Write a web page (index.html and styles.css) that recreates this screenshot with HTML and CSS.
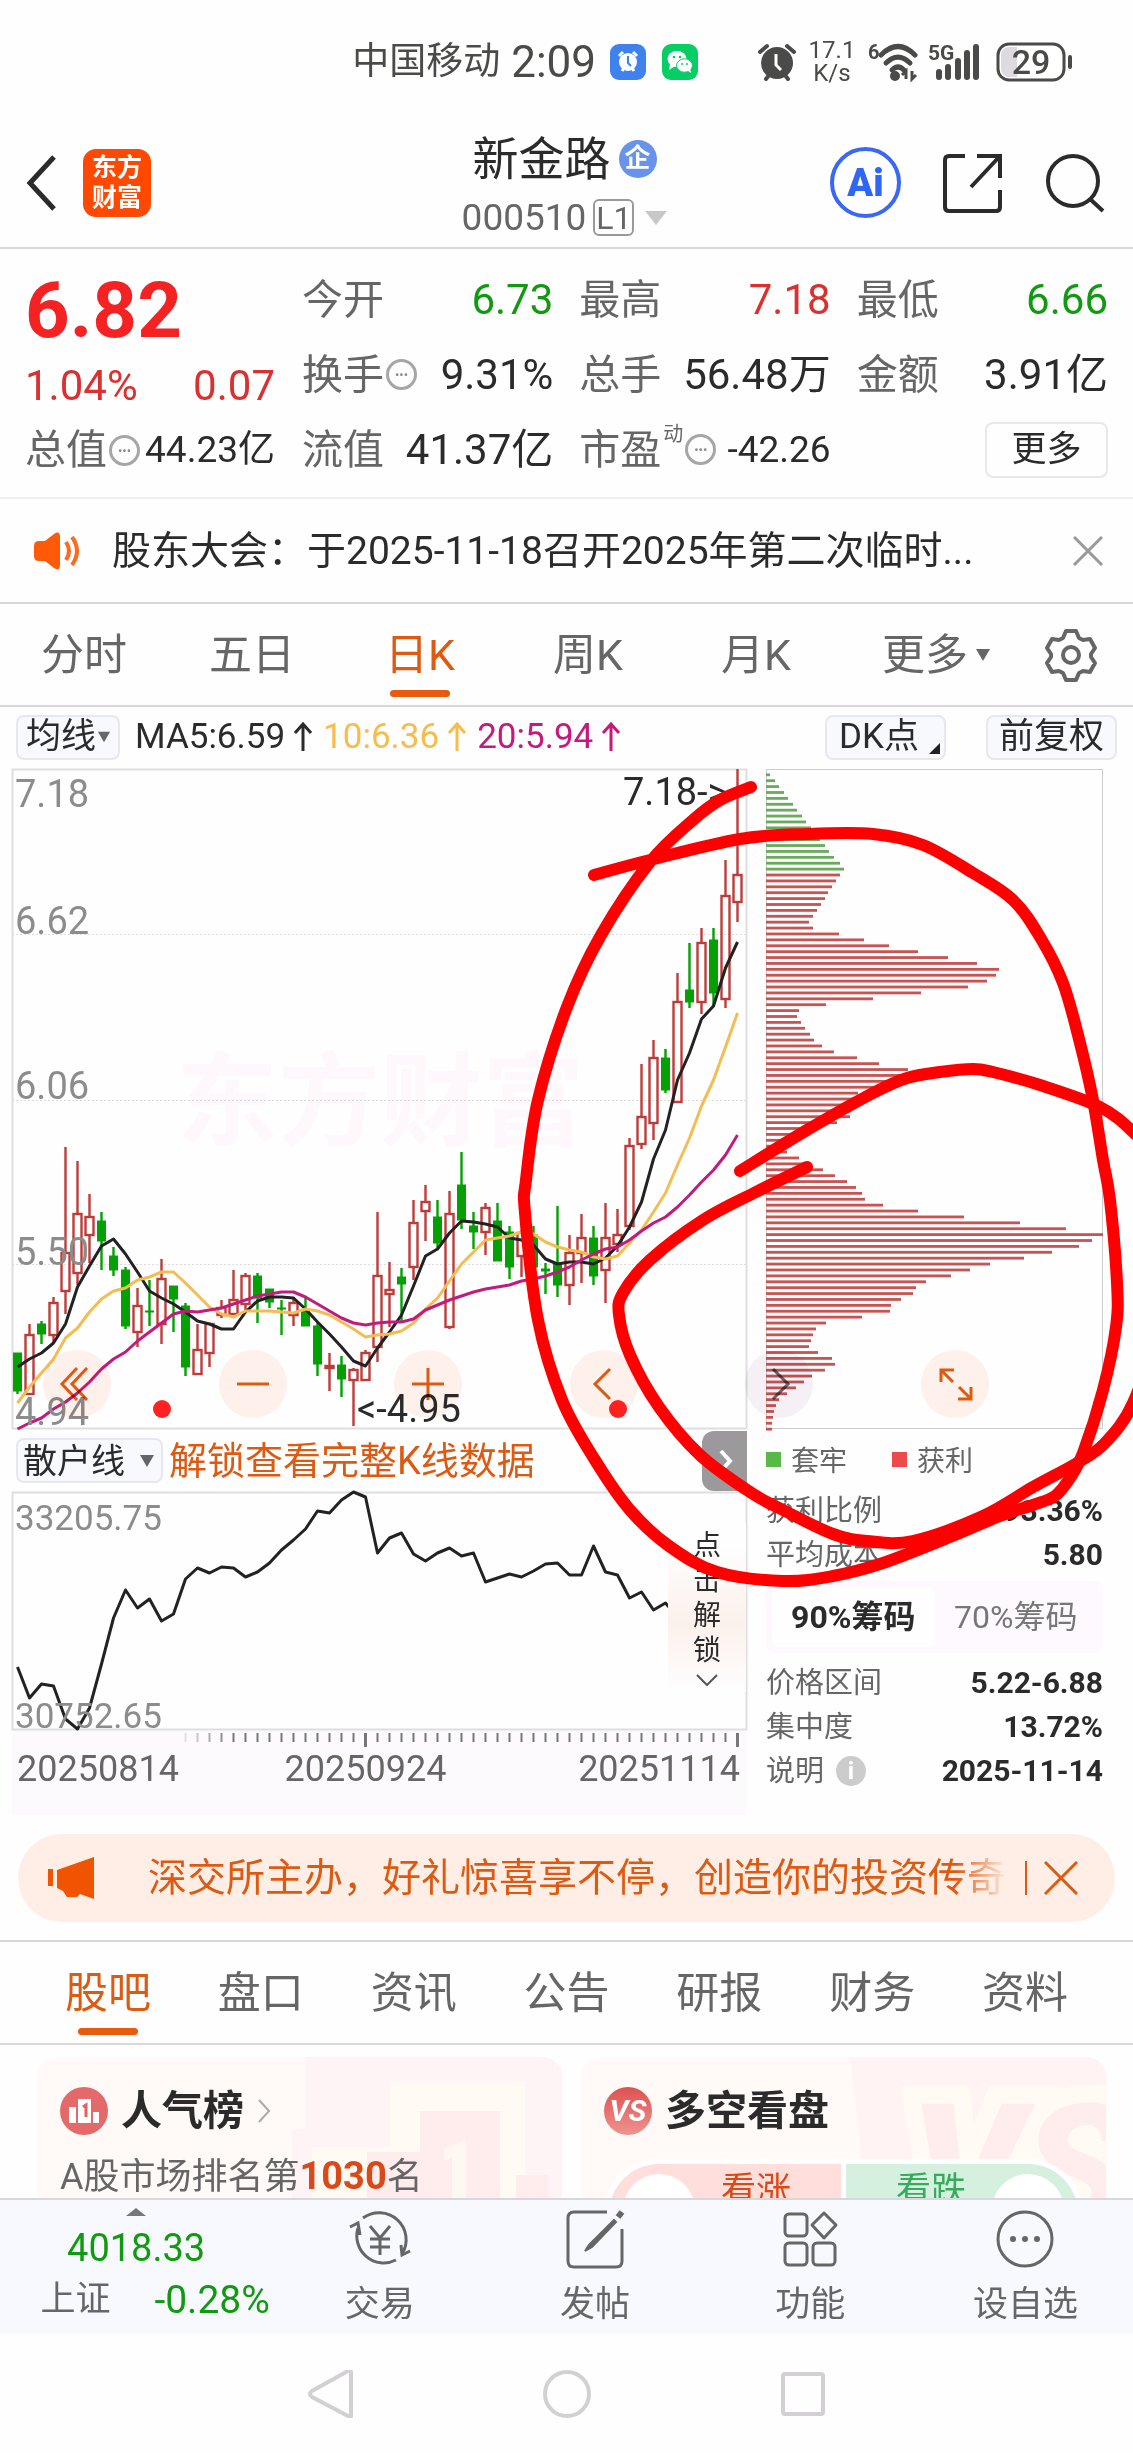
FILE: index.html
```html
<!DOCTYPE html>
<html lang="zh-CN">
<head>
<meta charset="utf-8">
<meta name="viewport" content="width=device-width, initial-scale=1">
<title>新金路 000510</title>
<link rel="stylesheet" href="styles.css">
</head>
<body>
<div class="app">
  <div class="status">
    <span class="carrier">中国移动</span>
    <span class="clock">2:09</span>
    <svg class="status-app" viewBox="0 0 36 36"><rect width="36" height="36" rx="9" fill="#3f82ee"/><circle cx="18" cy="18" r="9" fill="#fff"/><path d="M9 12l4-4M27 12l-4-4M12 27l2-3M24 27l-2-3" stroke="#fff" stroke-width="3"/><path d="M18 12v7l3 3" fill="none" stroke="#3f82ee" stroke-width="2"/></svg>
    <svg class="status-app second" viewBox="0 0 36 36"><rect width="36" height="36" rx="9" fill="#06ce64"/><ellipse cx="15" cy="15" rx="9.500" ry="8" fill="#fff"/><path d="M8 20l-1 6 6-4z" fill="#fff"/><ellipse cx="22.500" cy="21.500" rx="8" ry="6.700" fill="#fff" stroke="#06ce64"/><path d="M25 26l4 3-1-5z" fill="#fff"/><g fill="#06ce64"><circle cx="12" cy="13" r="1.300"/><circle cx="18" cy="13" r="1.300"/><circle cx="20" cy="20" r="1"/><circle cx="25" cy="20" r="1"/></g></svg>
    <svg class="alarm" viewBox="0 0 38 38"><circle cx="19" cy="20" r="16" fill="#4a4a48"/><path d="M2 9l7-6M36 9l-7-6M8 36l4-5M30 36l-4-5" stroke="#4a4a48" stroke-width="4" stroke-linecap="round"/><path d="M18 11v11l5 5" fill="none" stroke="#fff" stroke-width="3"/></svg>
    <span class="speed">17.1<br>K/s</span>
    <svg class="wifi" viewBox="0 0 52 42"><text x="0" y="18" font-size="20" font-weight="700">6</text><g fill="none" stroke="#4a4a48" stroke-width="5" stroke-linecap="round"><path d="M13 14q17-17 34 0"/><path d="M18 22q12-12 24 0"/><path d="M24 29q6-6 12 0"/></g><circle cx="27" cy="35" r="5" fill="#4a4a48"/><path d="M38 38v-8l-4 4M44 30v8l4-4" fill="none" stroke="#4a4a48" stroke-width="3"/></svg>
    <svg class="signal" viewBox="0 0 54 42"><text x="0" y="19" font-size="21" font-weight="700">5G</text><path d="M11 36v-5M20 36v-10M30 36v-16M39 36v-24M48 36V6" stroke="#4a4a48" stroke-width="6" stroke-linecap="round"/></svg>
    <svg class="battery" viewBox="0 0 78 40"><rect x="2" y="2" width="66" height="36" rx="11" fill="#fff" stroke="#4a4a48" stroke-width="3"/><path d="M13 5h8v30h-8a8 8 0 0 1-8-8V13a8 8 0 0 1 8-8z" fill="#dedadf"/><path d="M74 15v10" stroke="#4a4a48" stroke-width="4" stroke-linecap="round"/><text x="35" y="32" text-anchor="middle" font-size="34" font-weight="500">29</text></svg>
  </div>

  <header class="header">
    <div class="header-left">
      <button class="plain" aria-label="返回"><svg width="34" height="56" viewBox="0 0 34 56" fill="none" stroke="#2b2b2b" stroke-width="5"><path d="M30 2L6 28l24 26"/></svg></button>
      <span class="logo">东方<br>财富</span>
    </div>
    <div class="title-block">
      <h1>新金路<span class="corp">企</span></h1>
      <div class="code">000510<span class="level">L1</span><svg width="22" height="14" viewBox="0 0 22 14"><path d="M0 0h22L11 14z" fill="#c8c8c8"/></svg></div>
    </div>
    <div class="header-right">
      <button class="plain ai" aria-label="Ai">Ai</button>
      <button class="plain" aria-label="分享"><svg width="60" height="60" viewBox="0 0 60 60" fill="none" stroke="#2b2b2b" stroke-width="4"><path d="M22 3H6q-4 0-4 4v47q0 4 4 4h47q4 0 4-4V37M34 3h23v22M57 3L28 34"/></svg></button>
      <button class="plain" aria-label="搜索"><svg width="60" height="60" viewBox="0 0 60 60" fill="none" stroke="#2b2b2b" stroke-width="4"><circle cx="28" cy="28" r="25"/><path d="M45 46l13 12"/></svg></button>
    </div>
  </header>

  <section class="quote">
    <div class="last">
      <strong>6.82</strong>
      <div class="pair red"><span>1.04%</span><span>0.07</span></div>
      <div class="pair value"><span class="name">总值<i class="dots">•••</i></span><span class="small">44.23亿</span></div>
    </div>
    <dl class="stats">
      <div><dt>今开</dt><dd class="green">6.73</dd></div>
      <div><dt>最高</dt><dd class="red">7.18</dd></div>
      <div><dt>最低</dt><dd class="green">6.66</dd></div>
      <div><dt>换手<i class="dots">•••</i></dt><dd>9.31%</dd></div>
      <div><dt>总手</dt><dd>56.48万</dd></div>
      <div><dt>金额</dt><dd>3.91亿</dd></div>
      <div><dt>流值</dt><dd>41.37亿</dd></div>
      <div><dt>市盈<sup>动</sup><i class="dots">•••</i></dt><dd class="small">-42.26</dd></div>
      <div class="more-cell"><dt><button class="more">更多</button></dt></div>
    </dl>
  </section>

  <section class="notice">
    <svg width="46" height="38" viewBox="0 0 46 38"><path d="M0 14q0-5 5-5h6l9-7q6-4 6 3v28q0 7-6 3l-9-7H5q-5 0-5-5z" fill="#ff5a0a"/><path d="M32 10q6 9 0 18M38 5q10 14 0 28" fill="none" stroke="#ff6a20" stroke-width="4"/></svg>
    <p>股东大会：于2025-11-18召开2025年第二次临时...</p>
    <button class="plain" aria-label="关闭"><svg width="30" height="30" viewBox="0 0 30 30" stroke="#999" stroke-width="3"><path d="M1 1l28 28M29 1L1 29"/></svg></button>
  </section>

  <nav class="periods">
    <a href="#">分时</a><a href="#">五日</a><a href="#" class="active">日K</a><a href="#">周K</a><a href="#">月K</a><a href="#" class="more-tab">更多<svg width="14" height="12" viewBox="0 0 14 12"><path d="M0 0h14L7 12z" fill="#666"/></svg></a>
    <button class="plain" aria-label="设置"><svg width="54" height="54" viewBox="0 0 54 54" fill="none" stroke="#666" stroke-width="4" stroke-linejoin="round"><path d="M22 3h10l3 7 4 2 7-1 5 9-4 6v3l4 6-5 9-7-1-4 2-3 7H22l-3-7-4-2-7 1-5-9 4-6v-3l-4-6 5-9 7 1 4-2z"/><circle cx="27" cy="27" r="8"/></svg></button>
  </nav>

  <section class="analysis">
    <div class="toolbar">
      <button class="chip">均线<svg width="12" height="12" viewBox="0 0 14 12"><path d="M0 0h14L7 12z" fill="#666"/></svg></button>
      <span class="ma">MA5:6.59<svg width="20" height="30" viewBox="0 0 20 30"><path d="M10 29V2M2 11l8-9 8 9"/></svg></span>
      <span class="ma ten">10:6.36<svg width="20" height="30" viewBox="0 0 20 30"><path d="M10 29V2M2 11l8-9 8 9"/></svg></span>
      <span class="ma twenty">20:5.94<svg width="20" height="30" viewBox="0 0 20 30"><path d="M10 29V2M2 11l8-9 8 9"/></svg></span>
      <button class="chip dk">DK点<svg width="11" height="11" viewBox="0 0 11 11"><path d="M11 0v11H0z" fill="#222"/></svg></button>
      <button class="chip right">前复权</button>
    </div>
    <div class="charts">
      <div class="left-col">
        <svg class="chart" id="price" viewBox="12 769 735 660"></svg>
        <div class="indicator">
          <button class="chip">散户线<svg width="14" height="12" viewBox="0 0 14 12"><path d="M0 0h14L7 12z" fill="#666"/></svg></button>
          <a href="#">解锁查看完整K线数据</a>
          <button class="fold" aria-label="收起"><svg width="14" height="24" viewBox="0 0 14 24" fill="none" stroke="#fff" stroke-width="4"><path d="M2 2l9 10-9 10"/></svg></button>
        </div>
        <div class="sub">
          <svg class="chart" id="retail" viewBox="12 1492 735 238"></svg>
          <button class="unlock">点击解锁<svg width="22" height="12" viewBox="0 0 22 12" fill="none" stroke="#555" stroke-width="2"><path d="M1 1l10 10L21 1"/></svg></button>
        </div>
        <svg class="chart axis" id="ticks" viewBox="12 1730 735 85"></svg>
      </div>
      <div class="right-col">
        <svg class="chart" id="chips" viewBox="766 769 337 660"></svg>
        <div class="legend"><span><i class="trapped"></i>套牢</span><span><i class="profit"></i>获利</span></div>
        <dl class="facts">
          <div><dt>获利比例</dt><dd>93.36%</dd></div>
          <div><dt>平均成本</dt><dd>5.80</dd></div>
        </dl>
        <div class="switch"><button class="on">90%筹码</button><button>70%筹码</button></div>
        <dl class="facts">
          <div><dt>价格区间</dt><dd>5.22-6.88</dd></div>
          <div><dt>集中度</dt><dd>13.72%</dd></div>
          <div><dt>说明<i class="info">i</i></dt><dd>2025-11-14</dd></div>
        </dl>
      </div>
      <div class="controls">
        <button aria-label="最左"><svg viewBox="0 0 68 68"><path d="M34 18L19 34l15 16M44 18L29 34l15 16"/></svg></button>
        <button aria-label="缩小"><svg viewBox="0 0 68 68"><path d="M18 34h32"/></svg></button>
        <button aria-label="放大"><svg viewBox="0 0 68 68"><path d="M18 34h32M34 18v32"/></svg></button>
        <button aria-label="左移"><svg viewBox="0 0 68 68"><path d="M40 19L25 34l15 15"/></svg></button>
        <button aria-label="右移" class="off"><svg viewBox="0 0 68 68"><path d="M28 19l15 15-15 15"/></svg></button>
        <button aria-label="全屏"><svg viewBox="0 0 68 68"><path d="M20 32V20h13M20 20l12 12M50 37v12H37M50 49L38 37"/></svg></button>
      </div>
    </div>
    <svg class="marks" id="marks" viewBox="0 707 1133 1108"></svg>
  </section>

  <section class="promo">
    <svg width="48" height="42" viewBox="0 0 48 42"><path d="M0 12h5v17H0zM9 13L46 0v42l-14-5-3 3H19l-4-6-6-3z" fill="#f05400"/></svg>
    <p>深交所主办，好礼惊喜享不停，创造你的投资传奇！</p>
    <button class="plain" aria-label="关闭"><svg width="34" height="34" viewBox="0 0 34 34" stroke="#dd5a12" stroke-width="3"><path d="M1 1l32 32M33 1L1 33"/></svg></button>
  </section>

  <nav class="sections">
    <a href="#" class="active">股吧</a><a href="#">盘口</a><a href="#">资讯</a><a href="#">公告</a><a href="#">研报</a><a href="#">财务</a><a href="#">资料</a>
  </nav>

  <main class="feed">
    <article class="card rank">
      <svg class="art" width="270" height="143" viewBox="0 0 270 143" aria-hidden="true"><path d="M14 0h256v143H0V72h14z" fill="#fff4f5"/><path d="M98 24h135v119H20V90h78z" fill="#fffaf4"/><path d="M128 54h80v89H75V95h53zM224 118h32v25h-32z" fill="#ffeded"/><path d="M152 92l22-10v61h-14V100l-8 4z" fill="#fff7f2"/></svg>
      <h2><svg class="badge" viewBox="0 0 48 48"><circle cx="24" cy="24" r="24" fill="#e4696a"/><path d="M9 20h7v16H9zM18 12h13v24H18zM33 25h6v11h-6z" fill="#fff"/><path d="M23 20l3-2v12" fill="none" stroke="#e2605e" stroke-width="3"/></svg>人气榜<svg width="14" height="24" viewBox="0 0 14 24" fill="none" stroke="#aaa" stroke-width="2"><path d="M2 1l10 11L2 23"/></svg></h2>
      <p>A股市场排名第<b>1030</b>名</p>
    </article>
    <article class="card">
      <svg class="art" width="256" height="143" viewBox="0 0 256 143" aria-hidden="true"><path d="M0 0h256v143H16z" fill="#fff3f4"/><text x="60" y="172">VS</text></svg>
      <h2><span class="badge vs">VS</span>多空看盘</h2>
      <div class="vote"><button class="up"><i></i>看涨</button><button class="down">看跌<i></i></button></div>
    </article>
  </main>

  <footer class="tabbar">
    <a href="#" class="index">
      <svg width="20" height="8" viewBox="0 0 20 8"><path d="M0 8L10 0l10 8z" fill="#777"/></svg>
      <span class="green point">4018.33</span>
      <span class="index-row"><span>上证</span><span class="green change">-0.28%</span></span>
    </a>
    <a href="#"><svg viewBox="0 0 64 60"><path d="M15 9a27 27 0 0 1 39 36M48 51A27 27 0 0 1 10 19M2 18l8-4 2 12M62 42l-8 4-1-10"/><path d="M22 17l10 12 10-12M22 30h20M22 38h20M32 29v17"/></svg>交易</a>
    <a href="#"><svg viewBox="0 0 64 60"><path d="M44 3H11q-6 0-6 6v43q0 6 6 6h42q6 0 6-6V20"/><path d="M51 11L26 36l-4 6 7-4 24-25z" fill="#666" stroke-width="2"/><path d="M59 3l-4 5" stroke-width="6"/></svg>发帖</a>
    <a href="#"><svg viewBox="0 0 64 60"><rect x="7" y="5" width="22" height="22" rx="4"/><rect x="7" y="34" width="22" height="22" rx="4"/><rect x="35" y="34" width="22" height="22" rx="4"/><path d="M46 4l12 12-12 13-12-13z" stroke-linejoin="round"/></svg>功能</a>
    <a href="#"><svg viewBox="0 0 64 60"><circle cx="32" cy="30" r="27"/><g fill="#666" stroke="none"><circle cx="20" cy="30" r="3"/><circle cx="32" cy="30" r="3"/><circle cx="44" cy="30" r="3"/></g></svg>设自选</a>
  </footer>

  <div class="system">
    <svg viewBox="0 0 48 48"><path d="M44 2v44q0 2-3 0L5 27q-4-3 0-6L41 1q3-1 3 1z"/></svg>
    <svg viewBox="0 0 48 48"><circle cx="24" cy="24" r="22"/></svg>
    <svg viewBox="0 0 48 48"><rect x="4" y="4" width="40" height="40" rx="2"/></svg>
  </div>
</div>
<script src="script.js"></script>
</body>
</html>
```
FILE: styles.css
```css
* { box-sizing: border-box; }
body, h1, h2, p, dl, dd { margin: 0; }
body { background: #fefefe; color: #2b2b2b; font-family: Roboto, "Noto Sans CJK SC", sans-serif; overflow-x: hidden; }
button { font: inherit; color: inherit; margin: 0; }
a { color: inherit; text-decoration: none; }
i { font-style: normal; }
svg { display: block; flex: none; }
.plain { border: 0; padding: 0; background: none; }
.red { color: #d93030; }
.green { color: #119a11; }

.app { display: flex; flex-direction: column; height: 100vh; }
.app > * { flex: none; }

.status { height: 124px; padding-right: 59px; display: flex; align-items: center; justify-content: flex-end; color: #4a4a48; font-size: 37px; line-height: 44px; }
.status text { fill: #4a4a48; }
.clock { font-size: 44px; margin: 0 14px 0 11px; }
.status-app { width: 36px; height: 36px; }
.second { margin: 0 60px 0 16px; }
.alarm { width: 38px; height: 38px; }
.speed { width: 48px; margin: 0 12px; font-size: 24px; line-height: 23px; text-align: center; }
.wifi { width: 52px; height: 42px; margin-right: 8px; }
.signal { width: 54px; height: 42px; margin-right: 14px; }
.battery { width: 78px; height: 40px; }

.header { height: 125px; padding: 0 28px 0 24px; display: grid; grid-template-columns: 1fr auto 1fr; align-items: center; border-bottom: 2px solid #d8d8d8; }
.header-left, .header-right { display: flex; align-items: center; padding-bottom: 6px; }
.header-left { gap: 25px; }
.header-right { justify-content: flex-end; gap: 42px; }
.logo { width: 68px; height: 68px; padding-top: 4px; border-radius: 13px; background: #ff4800; color: #fff; font-size: 25px; font-weight: 700; line-height: 30px; text-align: center; }
.title-block { display: flex; flex-direction: column; align-items: center; gap: 4px; }
h1 { display: flex; align-items: center; gap: 8px; font-size: 46px; font-weight: 400; line-height: 60px; }
.corp { width: 38px; height: 38px; border-radius: 50%; background: #6893ea; color: #fff; font-size: 26px; line-height: 36px; text-align: center; font-weight: 700; }
.code { display: flex; align-items: center; font-size: 37px; line-height: 50px; color: #666; }
.level { margin: 0 11px 0 7px; width: 41px; height: 37px; border: 2px solid #999; border-radius: 6px; font-size: 32px; line-height: 34px; text-align: center; }
.ai { width: 71px; height: 71px; border: 4px solid #3a68f0; border-radius: 50%; color: #2f66f6; font-size: 38px; font-weight: 900; line-height: 60px; }

.quote { display: grid; grid-template-columns: 250px 1fr; gap: 27px; height: 250px; padding: 13px 25px 0; border-bottom: 2px solid #eee; }
.last strong { display: block; font-size: 78px; line-height: 98px; color: #f42222; }
.pair { display: flex; justify-content: space-between; align-items: center; font-size: 42px; line-height: 52px; }
.value { margin-top: 12px; font-size: 41px; }
.name { color: #666; display: flex; align-items: center; gap: 2px; }
.small { font-size: 37px; }
.stats { display: grid; grid-template-columns: repeat(3, 1fr); column-gap: 26px; grid-auto-rows: 75px; }
.stats > div { display: flex; justify-content: space-between; align-items: center; font-size: 41px; line-height: 52px; }
.stats dt { color: #666; display: flex; align-items: center; gap: 2px; }
.stats dd { font-size: 42px; }
.stats sup { align-self: flex-start; font-size: 20px; line-height: 20px; }
.stats .small { font-size: 37px; }
.dots { width: 31px; height: 31px; border: 3px solid #a6a6a6; border-radius: 50%; color: #8c8c8c; font-size: 13px; line-height: 25px; text-align: center; }
.stats .more-cell { justify-content: flex-end; }
.more { width: 123px; height: 56px; border: 2px solid #e8e8e8; border-radius: 8px; background: #fefefe; color: #2b2b2b; font-size: 35px; line-height: 48px; padding: 0; }

.notice { height: 105px; padding: 0 30px 0 34px; display: flex; align-items: center; border-bottom: 2px solid #d8d8d8; }
.notice p { flex: 1; margin-left: 32px; font-size: 39px; line-height: 52px; white-space: nowrap; }

.periods { height: 103px; display: grid; grid-template-columns: repeat(6, 168fr) 125fr; align-items: center; justify-items: center; border-bottom: 2px solid #d8d8d8; color: #666; font-size: 43px; }
.periods a { position: relative; line-height: 60px; display: flex; align-items: center; gap: 8px; }
.periods .more-tab { padding-left: 24px; }
.active { color: #dd5a12; }
.active::after { content: ""; position: absolute; left: 50%; bottom: -12px; width: 60px; height: 7px; margin-left: -30px; border-radius: 4px; background: #e85a0c; }

.analysis { position: relative; }
.toolbar { height: 62px; padding: 0 16px 2px; display: flex; align-items: center; }
.chip { height: 45px; padding: 0 8px; display: flex; align-items: center; gap: 2px; border: 2px solid #e6e8ee; border-radius: 8px; background: #f7f9fe; font-size: 35px; line-height: 40px; white-space: nowrap; }
.ma { display: flex; align-items: center; gap: 8px; margin-left: 15px; font-size: 35px; line-height: 44px; }
.ma path { fill: none; stroke: currentColor; stroke-width: 3; }
.ma + .ma { margin-left: 10px; }
.ten { color: #f6bd4c; }
.twenty { color: #c5197d; }
.dk { margin-left: auto; gap: 10px; padding: 0 4px 0 12px; }
.dk svg { align-self: flex-end; margin-bottom: 4px; }
.right { margin-left: 40px; padding: 0 11px; }
.charts { position: relative; display: grid; grid-template-columns: 735fr 337fr; gap: 19px; padding: 0 30px 0 12px; }
.chart { width: 100%; overflow: visible; }
.chart text { font-size: 38px; fill: #8c8c8c; }
.chart .mark-text { fill: #2b2b2b; }
.chart .watermark { font-size: 102px; font-weight: 700; fill: #fef8fc; }
#retail text { font-size: 35px; }
#ticks text { font-size: 36px; fill: #666; }
.indicator { height: 63px; display: flex; align-items: center; padding-left: 4px; }
.indicator .chip { gap: 15px; padding: 0 7px 0 5px; font-size: 34px; }
.indicator a { margin-left: 6px; color: #dd5a12; font-size: 38px; line-height: 52px; white-space: nowrap; }
.fold { margin-left: auto; width: 45px; height: 60px; border: 0; border-radius: 12px 0 0 12px; background: #9c999c; padding: 0 0 0 17px; }
.sub { position: relative; }
.unlock { position: absolute; right: 1px; top: 30px; width: 78px; height: 170px; border: 0; padding: 0 24px; background: linear-gradient(#fefefe 15%, #fbf1ec 60%, #fefefe); font-size: 28px; line-height: 35px; word-break: break-all; display: flex; flex-direction: column; align-items: center; justify-content: center; gap: 6px; }
.axis { background: #fdfafe; }
.right-col { display: flex; flex-direction: column; }
.legend { display: flex; gap: 45px; height: 60px; align-items: center; font-size: 28px; color: #666; }
.legend span { display: flex; align-items: center; gap: 10px; }
.legend i { width: 15px; height: 15px; }
.trapped { background: #59b947; }
.profit { background: #ec4a4c; }
.facts > div { display: flex; justify-content: space-between; align-items: center; height: 44px; font-size: 29px; line-height: 40px; }
.facts dt { color: #666; display: flex; align-items: center; gap: 12px; }
.facts dd { font-weight: 700; font-size: 30px; }
.info { width: 30px; height: 30px; border-radius: 50%; background: #ccc; color: #fff; font-size: 24px; line-height: 30px; font-weight: 700; text-align: center; }
.switch { display: grid; grid-template-columns: 1fr 1fr; margin: 4px 0 8px; padding: 6px; background: #fdf9fe; border-radius: 8px; }
.switch button { border: 0; padding: 0; height: 60px; background: none; border-radius: 6px; font-size: 32px; line-height: 44px; color: #777; }
.switch .on { background: #fefefe; font-weight: 700; color: #2b2b2b; }
.controls { position: absolute; left: 43px; right: 144px; top: 581px; display: flex; justify-content: space-between; mix-blend-mode: multiply; }
.controls button { width: 68px; height: 68px; border: 0; border-radius: 50%; padding: 0; background: #fff1ec; }
.controls path { fill: none; stroke: #dd5a12; stroke-width: 3; }
.controls .off { background: #f6f1f7; }
.controls .off path { stroke: #666; }
.marks { position: absolute; inset: 0; width: 100%; pointer-events: none; }
.marks path { fill: none; stroke: #fe0000; stroke-width: 12; stroke-linecap: round; stroke-linejoin: round; }

.promo { margin: 19px 18px 18px; height: 88px; border-radius: 44px; background: #feeee6; display: flex; align-items: center; padding: 0 37px 0 30px; color: #dd5a12; }
.promo p { flex: 1; min-width: 0; margin: 0 18px 0 52px; overflow: hidden; white-space: nowrap; font-size: 39px; line-height: 60px; -webkit-mask-image: linear-gradient(90deg, #000 94%, transparent); mask-image: linear-gradient(90deg, #000 94%, transparent); }
.promo .plain { border-left: 2px solid #dd5a12; padding-left: 17px; }

.sections { height: 105px; padding: 0 65px; border-top: 2px solid #d8d8d8; border-bottom: 2px solid #d8d8d8; display: flex; align-items: center; justify-content: space-between; color: #666; font-size: 43px; line-height: 60px; }
.sections a { position: relative; }

.app > .feed { flex: 1; min-height: 0; overflow: hidden; display: grid; grid-template-columns: 1fr 1fr; grid-auto-rows: 240px; gap: 19px; padding: 12px 27px 0 37px; }
.card { position: relative; overflow: hidden; border-radius: 20px; padding: 26px 23px; background: #fffaf7; }
.card > * { position: relative; }
.card .art { position: absolute; right: 0; top: 0; }
.art text { font-size: 176px; font-weight: 900; font-style: italic; fill: #ffecec; stroke: #fffaf4; stroke-width: 36px; paint-order: stroke; }
h2 { display: flex; align-items: center; gap: 13px; font-size: 41px; line-height: 56px; }
.badge { width: 48px; height: 48px; }
.vs { border-radius: 50%; background: linear-gradient(#dd5150, #ee9490); color: #fff; font-size: 30px; line-height: 48px; text-align: center; font-style: italic; }
.card p { margin-top: 12px; font-size: 36px; line-height: 52px; color: #666; }
.card b { font-size: 38px; line-height: 48px; color: #d84a18; }
.vote { display: grid; grid-template-columns: 1fr 1fr; gap: 5px; margin-top: 20px; padding: 5px; border-radius: 60px; background: #fff; }
.vote button { height: 100px; border: 0; padding: 0 14px; display: flex; align-items: flex-start; gap: 26px; font-size: 35px; line-height: 54px; }
.vote i { width: 72px; height: 72px; margin-top: 10px; border-radius: 50%; background: #fff; }
.up { border-radius: 50px 0 0 50px; background: #ffdedc; color: #d84a18; }
.down { border-radius: 0 50px 50px 0; background: #d5f0de; color: #36ab5c; justify-content: flex-end; }

.tabbar { height: 136px; border-top: 2px solid #d8d8d8; background: #f7f9fe; display: grid; grid-template-columns: 272fr 215fr 215fr 215fr 215fr; color: #666; font-size: 35px; line-height: 50px; }
.tabbar a { display: flex; flex-direction: column; align-items: center; gap: 11px; padding-top: 9px; }
.tabbar a > svg { width: 64px; height: 60px; fill: none; stroke: #666; stroke-width: 3; }
.tabbar a.index { gap: 8px; padding-top: 8px; }
.tabbar .index > svg { width: 20px; height: 8px; stroke: none; }
.point { font-size: 38px; line-height: 48px; }
.index-row { display: flex; gap: 44px; padding-left: 38px; line-height: 40px; }
.change { font-size: 39px; }

.system { height: 119px; display: flex; align-items: center; justify-content: center; gap: 188px; }
.system svg { width: 48px; height: 48px; fill: none; stroke: #d2d0d2; stroke-width: 4; }
```
FILE: script.js
```js
const NS = 'http://www.w3.org/2000/svg';
const add = (parent, tag, attrs, text) => {
  const el = document.createElementNS(NS, tag);
  for (const k in attrs) el.setAttribute(k, attrs[k]);
  if (text) el.textContent = text;
  parent.appendChild(el);
};
const xAt = i => 17.5 + 12 * i;
const RED = '#bd3c3a', GREEN = '#04a004';

// Candles: kind, body top, body bottom, high, low
const candles = [
  ['g',1353,1391,1353,1394],['r',1335,1394,1324,1394],['g',1324,1334,1321,1344],['r',1303,1335,1297,1343],['r',1253,1291,1147,1314],
  ['r',1214,1273,1161,1285],['r',1217,1235,1194,1263],['g',1221,1241,1212,1270],['g',1256,1270,1247,1276],['g',1270,1326,1267,1329],
  ['r',1306,1332,1288,1347],['g',1311,1312,1280,1326],['r',1279,1324,1259,1344],['g',1286,1299,1286,1332],['g',1306,1367,1303,1376],
  ['r',1350,1374,1324,1374],['r',1324,1353,1324,1367],['r',1308,1315,1300,1318],['r',1300,1314,1270,1314],['r',1276,1304,1273,1313],
  ['g',1276,1298,1273,1323],['g',1289,1302,1289,1308],['g',1308,1309,1300,1335],['r',1303,1315,1297,1326],['g',1310,1326,1297,1326],
  ['g',1326,1364,1323,1376],['r',1366,1368,1353,1391],['g',1365,1379,1356,1397],['r',1370,1380,1368,1426],['r',1353,1380,1350,1380],
  ['r',1276,1347,1212,1362],['r',1290,1294,1262,1327],['g',1277,1284,1268,1321],['r',1223,1267,1200,1280],['r',1202,1211,1185,1241],
  ['g',1217,1243,1200,1249],['r',1214,1327,1191,1329],['g',1185,1220,1152,1229],['g',1226,1232,1212,1249],['r',1208,1232,1203,1255],
  ['g',1221,1261,1203,1261],['g',1232,1267,1226,1279],['r',1233,1256,1230,1277],['g',1235,1267,1226,1272],['g',1269,1271,1263,1294],
  ['g',1264,1285,1206,1297],['r',1253,1285,1235,1305],['r',1238,1253,1214,1283],['g',1238,1276,1226,1285],['r',1238,1270,1203,1303],
  ['r',1235,1244,1209,1252],['r',1146,1226,1138,1230],['r',1117,1144,1064,1149],['r',1058,1123,1040,1140],['g',1058,1090,1049,1093],
  ['r',1002,1102,973,1102],['g',990,1002,943,1008],['r',943,1002,928,1014],['g',940,993,928,1007],['r',896,999,860,1008],['r',875,902,769,922]
];
const ma5 = [1367,1359,1353,1343,1324,1287,1266,1246,1239,1254,1272,1291,1298,1304,1312,1321,1324,1329,1329,1312,1301,1297,1297,1298,1309,1322,1334,1347,1361,1366,1348,1332,1315,1286,1256,1249,1233,1221,1222,1224,1227,1238,1240,1245,1259,1264,1262,1262,1264,1258,1246,1227,1202,1159,1130,1080,1053,1019,1006,968,942];
const ma10 = [1403,1387,1373,1359,1338,1328,1312,1299,1291,1288,1280,1277,1272,1272,1283,1295,1307,1314,1317,1311,1311,1311,1312,1313,1309,1311,1315,1322,1329,1337,1335,1334,1331,1323,1309,1298,1281,1264,1252,1240,1238,1236,1232,1234,1242,1247,1250,1252,1257,1259,1256,1243,1230,1212,1193,1165,1138,1106,1080,1047,1013];
const ma20 = [1429,1423,1418,1409,1402,1393,1382,1369,1359,1352,1341,1332,1323,1314,1311,1312,1310,1308,1304,1300,1296,1294,1292,1292,1297,1304,1311,1318,1323,1325,1323,1322,1322,1319,1310,1305,1300,1296,1292,1289,1287,1285,1281,1279,1276,1272,1267,1260,1254,1249,1247,1240,1231,1223,1217,1207,1195,1182,1170,1155,1135];
const retail = [1667,1698,1684,1686,1719,1729,1708,1664,1618,1590,1608,1599,1621,1614,1579,1568,1573,1567,1568,1577,1572,1563,1550,1540,1529,1511,1513,1500,1492,1497,1553,1538,1533,1554,1561,1553,1548,1556,1553,1582,1578,1574,1577,1571,1564,1563,1575,1575,1546,1572,1575,1598,1592,1610,1603,1617];
const chips = [4,9,13,18,22,27,31,36,40,45,49,54,59,63,68,74,78,74,70,66,62,59,55,51,47,43,47,73,98,123,152,182,211,233,230,221,202,155,107,60,33,31,35,39,44,48,56,68,91,113,142,134,122,108,92,88,87,85,84,71,53,38,28,18,21,33,45,57,69,81,90,96,99,117,152,198,254,300,337,326,313,286,258,224,204,185,160,150,147,135,125,124,96,60,50,47,45,43,52,66,69,59,46,38,30,21,13,10,8,7,6,6];

const line = (svg, ys, color) => add(svg, 'polyline', {
  points: ys.map((y, i) => xAt(i) + ',' + y).join(' '), fill: 'none', stroke: color, 'stroke-width': 3, 'stroke-linejoin': 'round'
});

const price = document.getElementById('price');
add(price, 'text', { x: 176, y: 1138, class: 'watermark' }, '东方财富');
add(price, 'rect', { x: 12.5, y: 769.5, width: 734, height: 659, fill: 'none', stroke: '#dedede', 'stroke-width': 2 });
[934, 1100, 1264].forEach(y => add(price, 'path', { d: `M12 ${y}.5H747`, stroke: '#ddd', 'stroke-dasharray': '2 2' }));
candles.forEach(([kind, top, bottom, high, low], i) => {
  const x = xAt(i), red = kind === 'r', color = red ? RED : GREEN;
  add(price, 'path', { d: `M${x} ${high}V${top}M${x} ${bottom}V${low}`, stroke: color, 'stroke-width': 2.4 });
  add(price, 'rect', { x: x - 4, y: top, width: 8, height: Math.max(1, bottom - top), fill: red ? 'none' : color, stroke: color, 'stroke-width': red ? 2.4 : 1 });
});
line(price, ma5, '#222');
line(price, ma10, '#f3bd54');
line(price, ma20, '#c01c7d');
[['7.18', 807], ['6.62', 934], ['6.06', 1099], ['5.50', 1265], ['4.94', 1425]].forEach(([t, y]) => add(price, 'text', { x: 15, y }, t));
add(price, 'text', { x: 623, y: 805, class: 'mark-text' }, '7.18->');
add(price, 'text', { x: 357, y: 1422, class: 'mark-text' }, '<-4.95');
[162, 618].forEach(cx => add(price, 'circle', { cx, cy: 1409, r: 9, fill: '#f22' }));

const sub = document.getElementById('retail');
add(sub, 'rect', { x: 12.5, y: 1492.5, width: 734, height: 237, fill: 'none', stroke: '#dedede', 'stroke-width': 2 });
line(sub, retail, '#222');
add(sub, 'text', { x: 15, y: 1530 }, '33205.75');
add(sub, 'text', { x: 15, y: 1728 }, '30752.65');

const ticks = document.getElementById('ticks');
for (let i = 14; i <= 60; i++) {
  const major = i === 29 || i === 60;
  add(ticks, 'path', { d: `M${xAt(i)} 1733V${major ? 1747 : 1742}`, stroke: '#777', 'stroke-width': major ? 3 : 2, opacity: Math.min(1, (i - 13) / 5) });
}
add(ticks, 'text', { x: 17, y: 1781 }, '20250814');
add(ticks, 'text', { x: xAt(29), y: 1781, 'text-anchor': 'middle' }, '20250924');
add(ticks, 'text', { x: 740, y: 1781, 'text-anchor': 'end' }, '20251114');

const dist = document.getElementById('chips');
add(dist, 'rect', { x: 766.5, y: 769.5, width: 336, height: 659, fill: 'none', stroke: '#ccc' });
chips.forEach((w, i) => add(dist, 'rect', { x: 766, y: 773.4 + i * 5.895, width: w, height: 2.8, fill: i < 17 ? '#69ab5c' : '#c75352' }));

// Hand-drawn marks, smoothed through their points
const smooth = p => {
  let d = `M${p[0]}`;
  for (let i = 0; i < p.length - 1; i++) {
    const a = p[i - 1] || p[i], b = p[i], c = p[i + 1], e = p[i + 2] || c;
    d += `C${b[0] + (c[0] - a[0]) / 6} ${b[1] + (c[1] - a[1]) / 6} ${c[0] - (e[0] - b[0]) / 6} ${c[1] - (e[1] - b[1]) / 6} ${c[0]} ${c[1]}`;
  }
  return d;
};
const marks = document.getElementById('marks');
[
  [[751,787],[720,800],[693,820],[650,862],[601,935],[567,1007],[538,1100],[526,1180],[525,1213],[538,1320],[562,1400],[595,1460],[630,1510],[669,1546],[717,1572],[783,1581],[833,1576],[883,1563],[950,1537],[1000,1516],[1033,1505],[1055,1496],[1070,1478],[1083,1453],[1103,1390],[1116,1327],[1117,1283],[1110,1200],[1103,1160],[1093,1100],[1080,1043],[1063,983],[1040,937],[1013,900],[973,873],[923,845],[873,834],[807,834],[740,839],[650,860],[594,875]],
  [[807,1167],[756,1192],[703,1220],[650,1260],[623,1293],[619,1315],[630,1355],[659,1407],[700,1455],[750,1492],[783,1510],[833,1534],[867,1541],[913,1541],[983,1516],[1033,1487],[1077,1463],[1105,1443],[1133,1403],[1155,1330],[1165,1240],[1155,1160],[1133,1132],[1100,1107],[1040,1085],[993,1072],[973,1069],[940,1072],[907,1078],[873,1093],[807,1130],[740,1171]]
].forEach(points => add(marks, 'path', { d: smooth(points) }));
```
